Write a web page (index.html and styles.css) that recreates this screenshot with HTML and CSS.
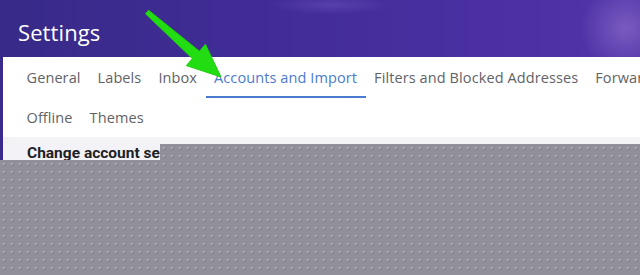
FILE: index.html
```html
<!DOCTYPE html>
<html>
<head>
<meta charset="utf-8">
<link rel="stylesheet" href="styles.css">
</head>
<body>
<div class="page">
  <header class="header">
    <h1 class="title">Settings</h1>
  </header>
  <div class="card">
    <nav class="tabs">
      <div class="tab">General</div>
      <div class="tab">Labels</div>
      <div class="tab">Inbox</div>
      <div class="tab active">Accounts and Import</div>
      <div class="tab">Filters and Blocked Addresses</div>
      <div class="tab">Forwarding and POP/IMAP</div>
    </nav>
    <nav class="tabs second">
      <div class="tab">Offline</div>
      <div class="tab">Themes</div>
    </nav>
    <section class="content">
      <div class="section-title">Change account settings:</div>
    </section>
  </div>
  <svg class="arrow" width="640" height="275" viewBox="0 0 640 275">
    <polygon points="145.5,13.8 148.6,10.2 199.4,51.2 205.4,44.2 221,77 186.4,65.6 192.4,58.6" fill="#22dd11" stroke="#1fcc10" stroke-width="1" stroke-linejoin="round"/>
  </svg>
  <div class="mask"></div>
</div>
</body>
</html>
```
FILE: styles.css
```css
* { box-sizing: border-box; }
html, body { margin: 0; padding: 0; }
body {
  width: 640px;
  height: 275px;
  overflow: hidden;
  font-family: "Open Sans", Roboto, sans-serif;
}
.page {
  position: relative;
  width: 640px;
  height: 275px;
  background: #3a2a8c;
}
.header {
  height: 57px;
  padding-left: 18px;
  display: flex;
  align-items: center;
  background:
    radial-gradient(circle at 625px 28px, rgba(170,140,220,0.45) 0, rgba(170,140,220,0) 45px),
    radial-gradient(ellipse at 330px 5px, rgba(150,120,220,0.25) 0, rgba(150,120,220,0) 60px),
    linear-gradient(90deg, #372a88 0%, #412c96 40%, #4a30a2 75%, #5234a9 100%);
}
.title {
  margin: 0;
  margin-top: 7px;
  font-size: 22px;
  font-weight: 400;
  color: #ffffff;
  letter-spacing: 0.1px;
}
.card {
  margin-left: 3px;
  background: #ffffff;
  height: 218px;
}
.tabs {
  display: flex;
  padding-left: 15px;
  white-space: nowrap;
  overflow: hidden;
}
.tabs .tab {
  position: relative;
  height: 41px;
  padding: 0 8.5px;
  display: flex;
  align-items: center;
  font-size: 14.5px;
  color: #5f6368;
  letter-spacing: 0.1px;
}
.tabs.second .tab {
  height: 39px;
}
.tab.active {
  color: #4a7bd0;
}
.tab.active::after {
  content: "";
  position: absolute;
  left: 0;
  right: 0;
  bottom: 0;
  height: 2px;
  background: #4a7bd0;
}
.content {
  background: #f3f3f7;
  height: 138px;
  padding: 7px 0 0 24px;
}
.section-title {
  font-family: Roboto, sans-serif;
  font-weight: 700;
  font-size: 15.5px;
  color: #202124;
}
.arrow {
  position: absolute;
  left: 0;
  top: 0;
}
.mask {
  position: absolute;
  left: 0;
  top: 144px;
  width: 640px;
  height: 131px;
  clip-path: polygon(160px 0, 640px 0, 640px 131px, 0 131px, 0 16px, 160px 16px);
  background-color: #919098;
  background-image:
    radial-gradient(circle at 4px 4px, rgba(215,215,222,0.8) 0, rgba(215,215,222,0.8) 0.5px, transparent 0.9px),
    radial-gradient(circle at 5px 5px, rgba(80,80,92,0.55) 0, rgba(80,80,92,0.55) 0.5px, transparent 0.9px);
  background-size: 8px 8px;
}
```
